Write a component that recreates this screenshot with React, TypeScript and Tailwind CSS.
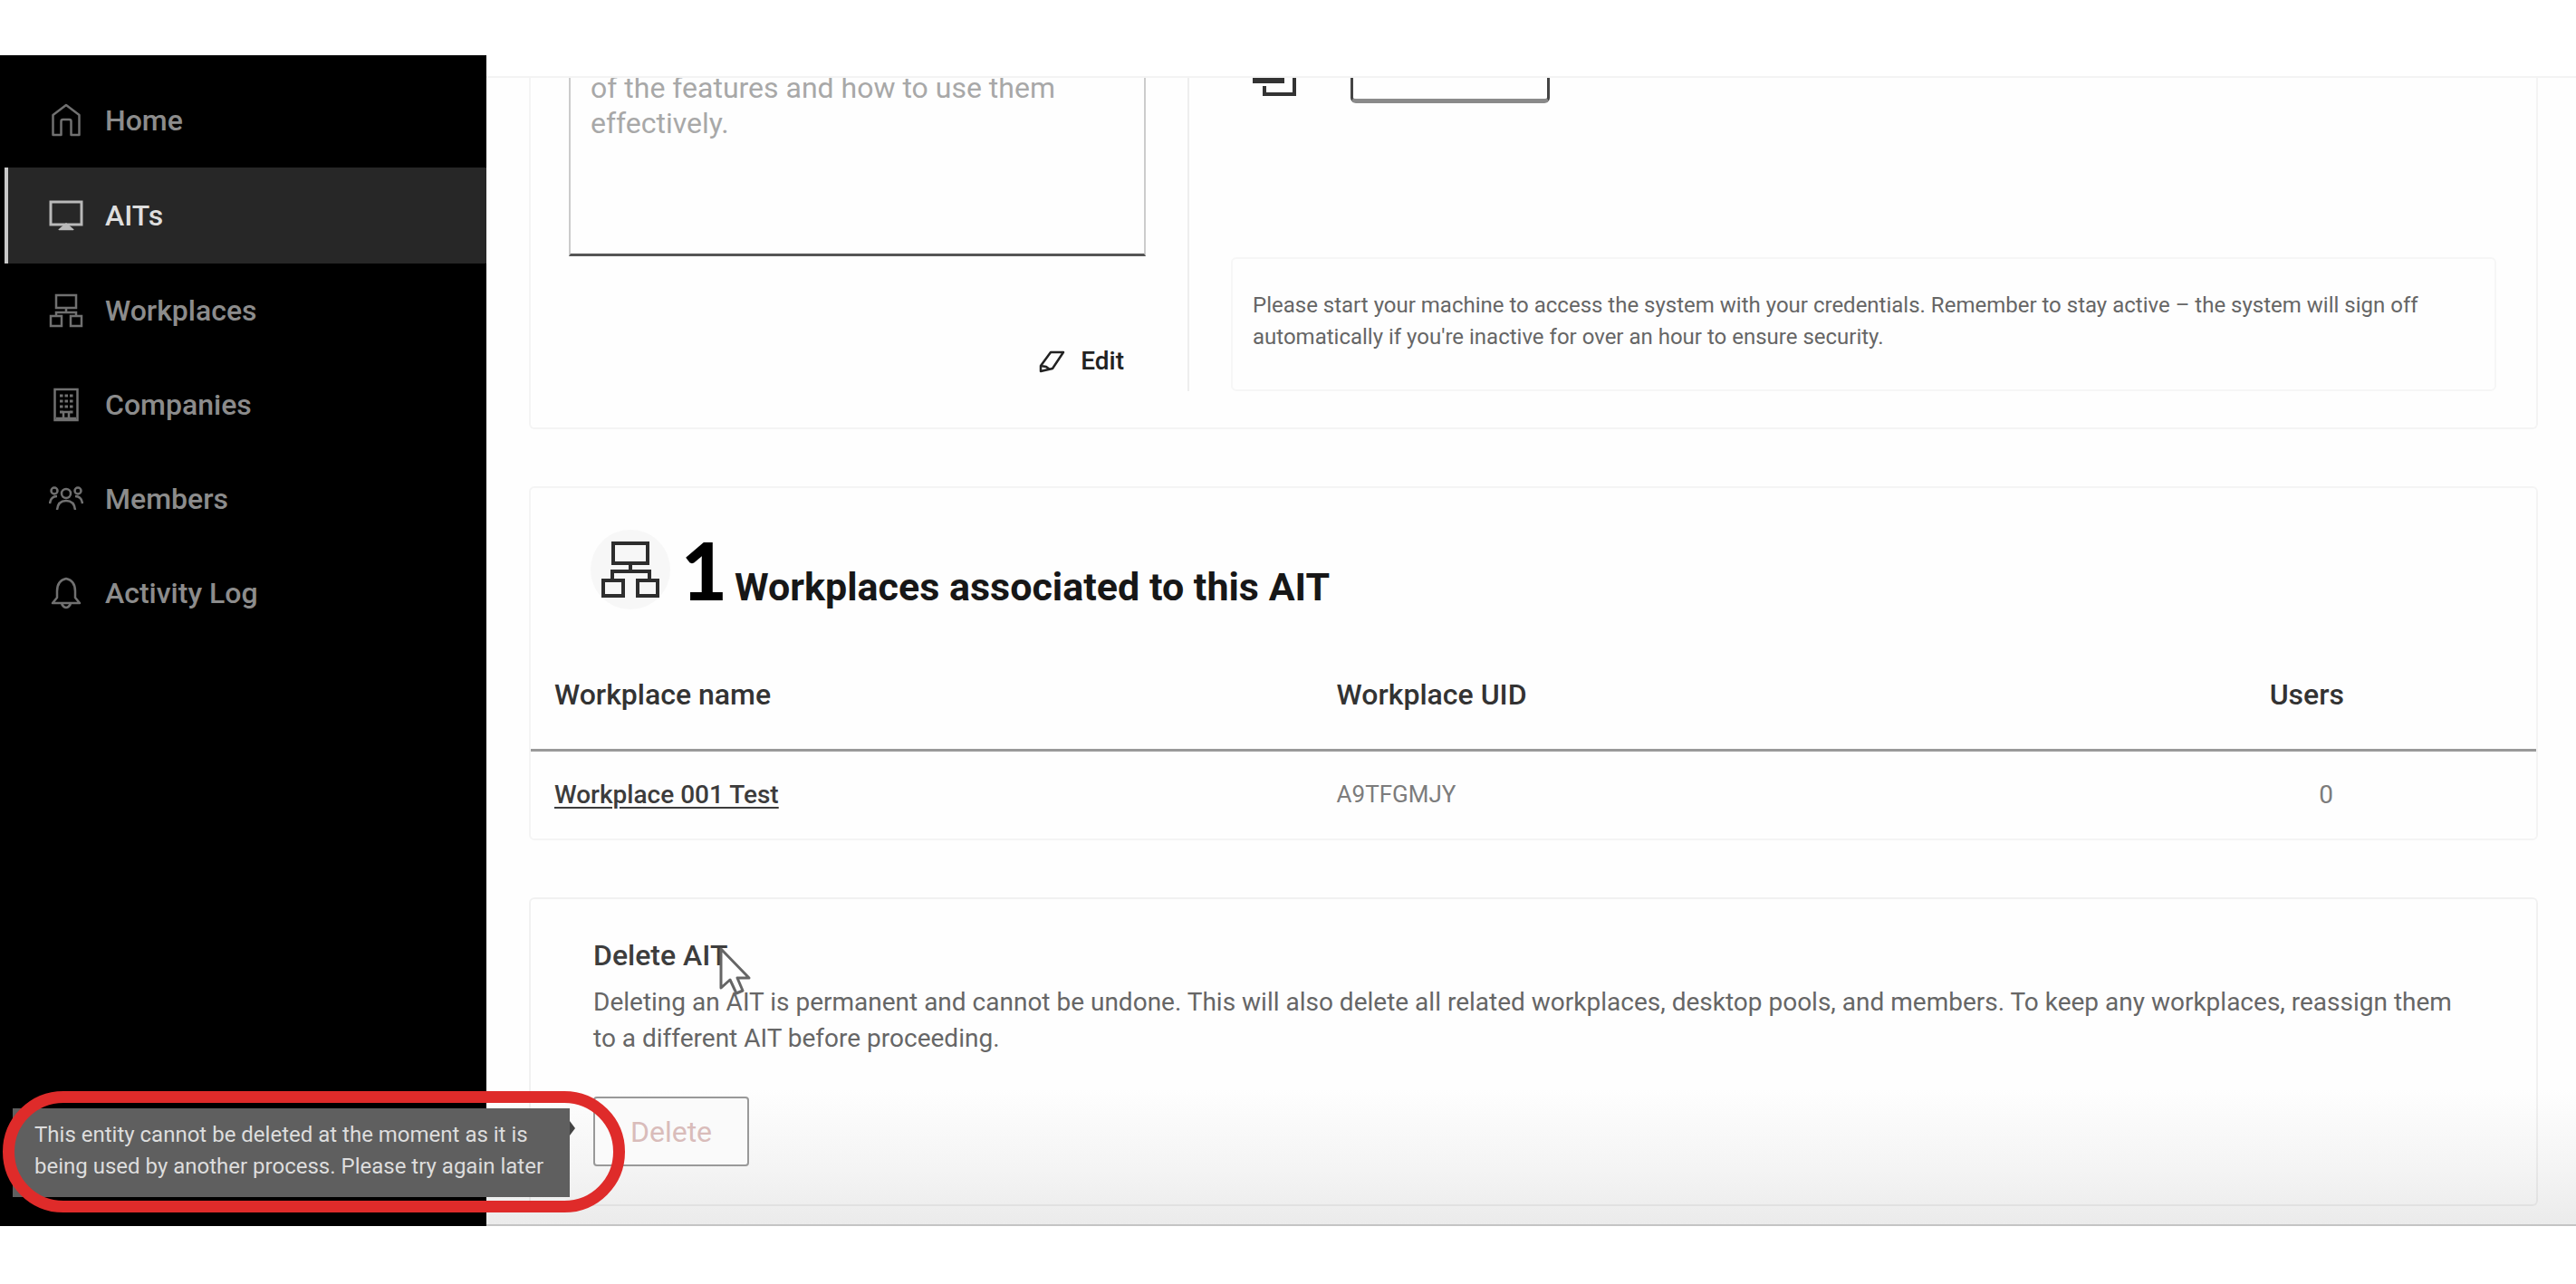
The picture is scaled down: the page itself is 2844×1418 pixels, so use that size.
import type { ReactNode } from "react";
import clsx from "clsx";

const CARD = "rounded-md border-2";

function Icon({ children }: { children: ReactNode }) {
  return (
    <svg
      viewBox="0 0 38 38"
      className="size-[38px] shrink-0 opacity-80"
      fill="none"
      stroke="currentColor"
      strokeWidth={2.5}
      aria-hidden="true"
    >
      {children}
    </svg>
  );
}

const HomeIcon = () => (
  <Icon>
    <path d="M19 2 4.500 13v22h9V20q0-2 2-2h7q2 0 2 2v15h9V13Z" strokeLinejoin="round" />
  </Icon>
);

const MonitorIcon = () => (
  <Icon>
    <path d="M2 4h34v25H2Z" strokeWidth={3} />
    <path d="M11 34.500h16M19 28l-7 6h14Z" fill="currentColor" strokeWidth={1.5} />
  </Icon>
);

const NetworkIcon = () => (
  <Icon>
    <path d="M8 2h22v14H8ZM19 16v5M8 25v-4h22v4M2 25h12v11H2ZM24 25h12v11H24Z" />
  </Icon>
);

const BuildingIcon = () => (
  <Icon>
    <path d="M6.500 2h25v34h-25Z" />
    <path d="M12 9h3.500M17.500 9H21M23 9h3.500M12 15h3.500M17.500 15H21M23 15h3.500M12 21h3.500M17.500 21H21M23 21h3.500M12 27h3.500M23 27h3.500" strokeWidth={3} />
    <path d="M16 35v-8h6v8M8 34h22" />
  </Icon>
);

const MembersIcon = () => (
  <Icon>
    <circle cx="19" cy="13" r="5" />
    <circle cx="6" cy="10" r="3.500" />
    <circle cx="32" cy="10" r="3.500" />
    <path d="M9 31q1-10 10-10t10 10M1 24q1-8 8-8M37 24q-1-8-8-8" />
  </Icon>
);

const BellIcon = () => (
  <Icon>
    <path d="M19 3q-10 2-10 14v7l-5 6h30l-5-6v-7Q29 5 19 3ZM14 31q5 8 10 0" strokeLinejoin="round" />
  </Icon>
);

const NAV = [
  { label: "Home", icon: <HomeIcon /> },
  { label: "AITs", icon: <MonitorIcon />, active: true },
  { label: "Workplaces", icon: <NetworkIcon /> },
  { label: "Companies", icon: <BuildingIcon /> },
  { label: "Members", icon: <MembersIcon /> },
  { label: "Activity Log", icon: <BellIcon /> },
];

const WORKPLACES = [{ name: "Workplace 001 Test", uid: "A9TFGMJY", users: 0 }];

function Sidebar() {
  return (
    <nav className="w-[537px] shrink-0 bg-black pt-5">
      <ul>
        {NAV.map((item) => (
          <li key={item.label} className="pl-[5px]">
            <a
              href="#"
              className={clsx(
                "flex items-center gap-6 border-l-4 pl-[45px] text-[32px] font-medium",
                item.active
                  ? "h-[106px] border-[#c8c8c8] bg-[#272727] text-[#dedede]"
                  : "h-[104px] border-black text-[#8c8c8c]"
              )}
            >
              {item.icon}
              {item.label}
            </a>
          </li>
        ))}
      </ul>
    </nav>
  );
}

function DetailsCard() {
  return (
    // Scrolled partly under the page header.
    <section className={clsx(CARD, "-mt-2 grid grid-cols-[727px_1fr] rounded-t-none border-t-0 border-[#f4f4f4] pb-10")}>
      <div className="flex flex-col border-r-2 border-[#eeeeee] pr-[46px] pl-[42px]">
        <textarea
          aria-label="Description"
          readOnly
          className="block h-[205px] w-full resize-none overflow-hidden border-x-2 border-b-3 border-x-[#cccccc] border-b-[#555555] px-[22px] text-[32px] leading-[39px] text-[#a8a8a8] outline-none"
          value="of the features and how to use them effectively."
        />
        <button className="mt-24 mr-6 flex items-center gap-4 self-end text-[28px] leading-10 font-medium text-[#222222]">
          <svg viewBox="0 0 32 26" className="h-[26px] w-8" fill="none" stroke="currentColor" strokeWidth={2.5} aria-hidden="true">
            <path d="M15 3h14L17 21 4 24V18ZM4 18l6 1 4 3" strokeLinejoin="round" />
          </svg>
          Edit
        </button>
      </div>
      <div className="pr-11 pl-[46px]">
        <div className="flex items-start gap-[60px] pl-6">
          <svg viewBox="0 0 48 30" className="h-[30px] w-12" fill="none" stroke="#333333" aria-hidden="true">
            <path d="M0 11h35" strokeWidth={6} />
            <path d="M13 17v9h33V0" strokeWidth={4} />
          </svg>
          <button
            aria-label="Open"
            className="h-9 w-[220px] rounded-b-md border-x-3 border-b-5 border-x-[#444444] border-b-[#8a8a8a]"
          />
        </div>
        <p className="mt-[170px] rounded-md border-2 border-[#f6f6f6] px-[22px] pt-[34px] pb-10 text-[24px] leading-[35px] text-[#666666]">
          Please start your machine to access the system with your credentials. Remember to stay active – the
          system will sign off
          <br />
          automatically if you're inactive for over an hour to ensure security.
        </p>
      </div>
    </section>
  );
}

function WorkplacesCard() {
  return (
    <section className={clsx(CARD, "border-[#f4f4f4]")}>
      <div className="flex items-start pt-[46px] pl-[66px]">
        <span className="grid size-[88px] place-items-center rounded-full bg-[#f7f7f7]">
          <svg viewBox="0 0 64 62" className="h-[62px] w-16" fill="none" stroke="#2d2d2d" strokeWidth={4} aria-hidden="true">
            <path d="M13 2h38v22H13ZM32 24v9M12 43V33h41v10M2 43h22v17H2ZM40 43h22v17H40Z" />
          </svg>
        </span>
        <h2 className="flex items-baseline gap-2 pl-3 text-[43px] leading-[88px] font-bold text-[#171717]">
          <span className="font-[Lato] text-[88px] font-black text-black">{WORKPLACES.length}</span>
          Workplaces associated to this AIT
        </h2>
      </div>
      <table className="mt-3 w-full text-left">
        <thead>
          <tr className="h-[124px] border-b-3 border-[#999999] text-[32px] text-[#333333]">
            <th className="w-[40%] pt-1 pl-[26px] font-medium">Workplace name</th>
            <th className="pt-1 pl-1 font-medium">Workplace UID</th>
            <th className="pt-1 pr-[212px] text-right font-medium">Users</th>
          </tr>
        </thead>
        <tbody>
          {WORKPLACES.map((w) => (
            <tr key={w.uid} className="h-[98px] text-[28px] text-[#7c7c7c]">
              <td className="pl-[26px]">
                <a href="#" className="font-medium text-[#3c3c3c] underline decoration-2 underline-offset-4">
                  {w.name}
                </a>
              </td>
              <td className="pl-1 text-[26px]">{w.uid}</td>
              <td className="pr-[224px] text-right">{w.users}</td>
            </tr>
          ))}
        </tbody>
      </table>
    </section>
  );
}

function DeleteCard() {
  return (
    <section className={clsx(CARD, "relative border-black/5 px-[69px] pt-[42px] pb-[42px]")}>
      <h2 className="text-[32px] leading-10 font-medium text-[#3d3d3d]">Delete AIT</h2>
      <p className="mt-3 text-[28px] leading-10 text-[#666666]">
        Deleting an AIT is permanent and cannot be undone. This will also delete all related workplaces,
        desktop pools, and members. To keep any workplaces, reassign them
        <br />
        to a different AIT before proceeding.
      </p>
      <button
        disabled
        className="mt-11 h-[77px] w-[172px] rounded-sm border-2 border-[#999999] bg-[#fafafa] text-[32px] text-[#d9bcba]"
      >
        Delete
      </button>
      <svg viewBox="0 0 36 54" className="absolute top-[52px] left-[207px] h-[54px] w-9" aria-hidden="true">
        <path d="M3 3v43l10-9 7 15 7-3-6-14h13Z" fill="#ffffff" stroke="#666666" strokeWidth={3} strokeLinejoin="round" />
      </svg>
    </section>
  );
}

export default function App() {
  return (
    <div className="relative min-h-screen bg-white py-[61px] font-[Roboto,sans-serif]">
      <div className="relative flex">
        <Sidebar />
        <main className="min-w-0 flex-1 border-b-2 border-[#c4c4c4] bg-[linear-gradient(to_top,#ebebeb,#f4f4f4_60px,#fefefe_150px)]">
          <div className="h-[25px] border-b-2 border-[#f3f3f3] bg-white" />
          <div className="flex flex-col gap-[63px] overflow-hidden pr-[42px] pb-5 pl-[47px]">
            <DetailsCard />
            <WorkplacesCard />
            <DeleteCard />
          </div>
        </main>

        <div
          role="tooltip"
          className="absolute bottom-8 left-[14px] h-[98px] w-[615px] bg-[#5f5f5f] px-6 pt-3 text-[24px] leading-[35px] text-[#dddddd]"
        >
          This entity cannot be deleted at the moment as it is
          <br />
          being used by another process. Please try again later
          <span className="absolute top-[14px] -right-[6px] border-y-8 border-l-6 border-y-transparent border-l-[#444444]" />
        </div>
        <div className="pointer-events-none absolute bottom-[15px] left-[3px] h-[134px] w-[687px] rounded-full border-[13px] border-[#df2b2a]" />
      </div>
    </div>
  );
}
